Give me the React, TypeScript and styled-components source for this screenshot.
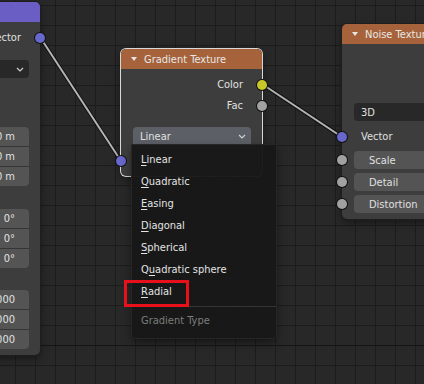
import styled, { createGlobalStyle } from 'styled-components';

const GlobalStyle = createGlobalStyle`
  html, body {
    margin: 0;
    padding: 0;
    background: #282828;
    overflow: hidden;
  }
  body {
    font-family: "DejaVu Sans Condensed", "DejaVu Sans", sans-serif;
    font-stretch: condensed;
    font-size: 11px;
  }
`;

const Canvas = styled.div`
  position: relative;
  width: 424px;
  height: 384px;
  overflow: hidden;
  background-color: #282828;
  background-image:
    linear-gradient(to bottom, transparent 345px, #151515 345px, #151515 346px, transparent 346px),
    linear-gradient(to right, #1c1c1c 1px, transparent 1px),
    linear-gradient(to bottom, #1c1c1c 1px, transparent 1px);
  background-size: 424px 384px, 20px 20px, 20px 20px;
  background-position: 0 0, 15px 5px, 15px 5px;
  background-repeat: no-repeat, repeat, repeat;
`;

const Links = styled.svg`
  position: absolute;
  left: 0;
  top: 0;
  pointer-events: none;
`;

const Node = styled.div<{ $x: number; $y: number; $w: number; $selected?: boolean }>`
  position: absolute;
  left: ${p => p.$x}px;
  top: ${p => p.$y}px;
  width: ${p => p.$w}px;
  display: flex;
  flex-direction: column;
  background: #3d3d3d;
  border-radius: 5px;
  box-shadow: ${p => (p.$selected ? '0 0 0 1px #d8d8d8' : '0 0 0 1px #1e1e1e')},
    0 3px 8px rgba(0, 0, 0, 0.45);
  color: #e0e0e0;
`;

const Header = styled.div<{ $color: string }>`
  height: 20px;
  display: flex;
  align-items: center;
  gap: 7px;
  padding-left: 10px;
  background: ${p => p.$color};
  border-radius: 5px 5px 0 0;
  color: #e8e8e8;
  white-space: nowrap;
`;

const Collapse = styled.span`
  width: 0;
  height: 0;
  border-left: 3px solid transparent;
  border-right: 3px solid transparent;
  border-top: 4px solid #e6e6e6;
`;

const Body = styled.div<{ $pad: string }>`
  display: flex;
  flex-direction: column;
  padding: ${p => p.$pad};
`;

const SocketRow = styled.div<{ $side: 'in' | 'out'; $gap?: number }>`
  position: relative;
  height: 21px;
  margin-top: ${p => p.$gap ?? 0}px;
  display: flex;
  align-items: center;
  justify-content: ${p => (p.$side === 'out' ? 'flex-end' : 'flex-start')};
  padding: 0 19px;
  white-space: nowrap;
`;

const Socket = styled.span<{ $color: string; $side: 'in' | 'out' }>`
  position: absolute;
  top: 50%;
  ${p => (p.$side === 'out' ? 'right: -5px;' : 'left: -5px;')}
  width: 10px;
  height: 10px;
  margin-top: -5px;
  border-radius: 50%;
  background: ${p => p.$color};
  box-shadow: 0 0 0 1px #111;
`;

const Dropdown = styled.div<{ $open?: boolean; $gap: number }>`
  height: 18px;
  margin: ${p => p.$gap}px 11px 0 12px;
  display: flex;
  align-items: center;
  justify-content: space-between;
  padding: 0 5px 0 7px;
  border-radius: ${p => (p.$open ? '4px 4px 0 0' : '4px')};
  background: ${p => (p.$open ? '#5c5f65' : '#282828')};
  white-space: nowrap;
`;

const FieldGroup = styled.div<{ $gap: number }>`
  margin: ${p => p.$gap}px 11px 0 12px;
  display: flex;
  flex-direction: column;
  gap: 1px;
  border-radius: 4px;
  overflow: hidden;
  background: #353535;
`;

const GroupRow = styled.div`
  height: 19px;
  display: flex;
  align-items: center;
  justify-content: flex-end;
  padding-right: 14px;
  background: #545454;
  white-space: nowrap;
`;

const GroupLabel = styled.div`
  margin: 14px 12px 0;
  height: 14px;
  white-space: nowrap;
`;

const FieldRow = styled.div<{ $gap: number }>`
  position: relative;
  height: 18px;
  margin: ${p => p.$gap}px 11px 0 12px;
  display: flex;
  align-items: center;
  justify-content: space-between;
  padding: 0 12px 0 15px;
  border-radius: 4px;
  background: #545454;
  white-space: nowrap;
`;

const FieldSocket = styled(Socket)`
  left: -17px;
`;

const Menu = styled.div`
  position: absolute;
  left: 132px;
  top: 145px;
  width: 144px;
  height: 193px;
  box-sizing: border-box;
  padding-top: 3px;
  display: flex;
  flex-direction: column;
  background: rgba(24, 24, 24, 0.97);
  border-radius: 0 0 4px 4px;
  box-shadow: 0 0 0 1px #262626, 0 4px 10px rgba(0, 0, 0, 0.5);
  color: #e4e4e4;
`;

const MenuItem = styled.div<{ $muted?: boolean }>`
  height: 22px;
  display: flex;
  align-items: center;
  padding-left: 9px;
  color: ${p => (p.$muted ? '#7d7d7d' : '#e4e4e4')};
  white-space: nowrap;
`;

const Key = styled.span`
  text-decoration: underline;
  text-underline-offset: 2px;
  text-decoration-thickness: 1px;
`;

const Separator = styled.div`
  height: 1px;
  margin: 4px 0 2px 1px;
  background: #363636;
`;

const Highlight = styled.div`
  position: absolute;
  left: 124px;
  top: 280px;
  width: 65px;
  height: 27px;
  box-sizing: border-box;
  border: 3px solid #e8101a;
`;

const VECTOR = '#6767cc';
const COLOR = '#c7c729';
const GREY = '#a1a1a1';

function Chevron() {
  return (
    <svg width="8" height="5" viewBox="0 0 8 5">
      <polyline points="1,1 4,4 7,1" fill="none" stroke="#d0d0d0" strokeWidth="1.2" />
    </svg>
  );
}

const GRADIENT_TYPES: [string, string, string][] = [
  ['', 'L', 'inear'],
  ['', 'Q', 'uadratic'],
  ['', 'E', 'asing'],
  ['', 'D', 'iagonal'],
  ['', 'S', 'pherical'],
  ['Q', 'u', 'adratic sphere'],
  ['', 'R', 'adial'],
];

function Link({ x1, y1, x2, y2 }: { x1: number; y1: number; x2: number; y2: number }) {
  return (
    <g>
      <line x1={x1} y1={y1} x2={x2} y2={y2} stroke="rgba(0,0,0,0.55)" strokeWidth="4" />
      <line x1={x1} y1={y1} x2={x2} y2={y2} stroke="#b4b4b4" strokeWidth="2" />
    </g>
  );
}

export default function App() {
  return (
    <>
      <GlobalStyle />
      <Canvas>
        <Links width="424" height="384">
          <Link x1={40} y1={37} x2={121} y2={161} />
          <Link x1={262} y1={84} x2={342} y2={137} />
        </Links>

        {/* Mapping node, mostly off screen to the left */}
        <Node $x={-100} $y={2} $w={140}>
          <Header $color="#6a5ec4">
            <Collapse />
            Mapping
          </Header>
          <Body $pad="5px 0 6px">
            <SocketRow $side="out">
              Vector
              <Socket $side="out" $color={VECTOR} />
            </SocketRow>
            <Dropdown $gap={12}>
              Point
              <Chevron />
            </Dropdown>
            <GroupLabel>Location:</GroupLabel>
            <FieldGroup $gap={21}>
              <GroupRow>0 m</GroupRow>
              <GroupRow>0 m</GroupRow>
              <GroupRow>0 m</GroupRow>
            </FieldGroup>
            <FieldGroup $gap={23}>
              <GroupRow>0°</GroupRow>
              <GroupRow>0°</GroupRow>
              <GroupRow>0°</GroupRow>
            </FieldGroup>
            <FieldGroup $gap={22}>
              <GroupRow>1.000</GroupRow>
              <GroupRow>1.000</GroupRow>
              <GroupRow>1.000</GroupRow>
            </FieldGroup>
          </Body>
        </Node>

        <Node $x={121} $y={49} $w={141} $selected>
          <Header $color="#a6623a">
            <Collapse />
            Gradient Texture
          </Header>
          <Body $pad="5px 0 5px">
            <SocketRow $side="out">
              Color
              <Socket $side="out" $color={COLOR} />
            </SocketRow>
            <SocketRow $side="out">
              Fac
              <Socket $side="out" $color={GREY} />
            </SocketRow>
            <Dropdown $gap={11} $open>
              Linear
              <Chevron />
            </Dropdown>
            <SocketRow $side="in" $gap={5}>
              Vector
              <Socket $side="in" $color={VECTOR} />
            </SocketRow>
          </Body>
        </Node>

        <Node $x={342} $y={24} $w={140}>
          <Header $color="#a6623a">
            <Collapse />
            Noise Texture
          </Header>
          <Body $pad="4px 0 6px">
            <SocketRow $side="out">
              Fac
              <Socket $side="out" $color={GREY} />
            </SocketRow>
            <SocketRow $side="out">
              Color
              <Socket $side="out" $color={COLOR} />
            </SocketRow>
            <Dropdown $gap={13}>
              3D
              <Chevron />
            </Dropdown>
            <SocketRow $side="in" $gap={5}>
              Vector
              <Socket $side="in" $color={VECTOR} />
            </SocketRow>
            <FieldRow $gap={4}>
              <span>Scale</span>
              <span>1.000</span>
              <FieldSocket $side="in" $color={GREY} />
            </FieldRow>
            <FieldRow $gap={4}>
              <span>Detail</span>
              <span>2.000</span>
              <FieldSocket $side="in" $color={GREY} />
            </FieldRow>
            <FieldRow $gap={4}>
              <span>Distortion</span>
              <span>0.000</span>
              <FieldSocket $side="in" $color={GREY} />
            </FieldRow>
          </Body>
        </Node>

        <Menu>
          {GRADIENT_TYPES.map(([pre, key, rest]) => (
            <MenuItem key={pre + key + rest}>
              {pre}
              <Key>{key}</Key>
              {rest}
            </MenuItem>
          ))}
          <Separator />
          <MenuItem $muted>Gradient Type</MenuItem>
        </Menu>

        <Highlight />
      </Canvas>
    </>
  );
}
